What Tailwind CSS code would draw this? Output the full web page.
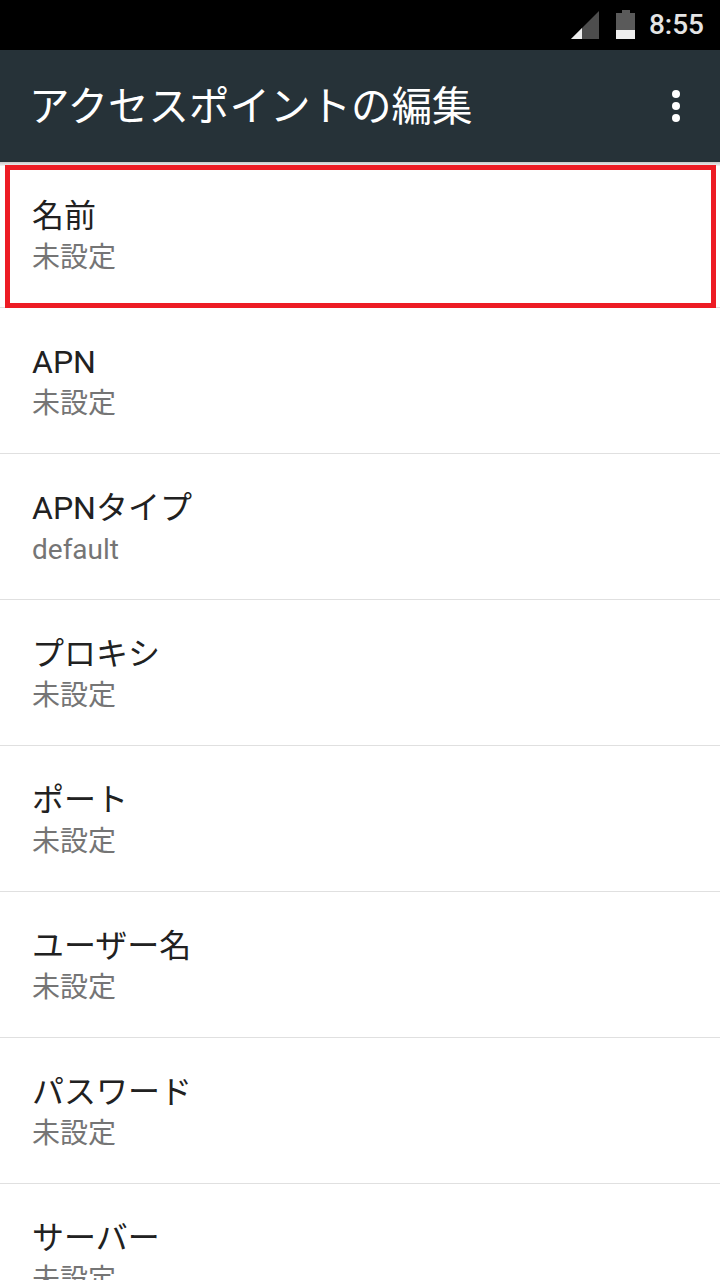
<!DOCTYPE html>
<html lang="ja">
<head>
    <meta charset="UTF-8">
    <title>アクセスポイントの編集</title>
    <script src="https://cdn.jsdelivr.net/npm/@tailwindcss/browser@4"></script>
</head>
<body class="bg-white">
<div class="relative w-[720px] h-[1280px] overflow-hidden bg-white font-['Roboto','Noto_Sans_CJK_JP',sans-serif]">
    <!-- status bar -->
    <div class="h-[50px] bg-black flex items-center justify-end">
        <svg width="30" height="30" viewBox="0 0 30 30" class="mr-[15px]">
            <path d="M1 29 L29 1 V29 Z" fill="#4d4d4d"/>
            <path d="M1 29 L12 18 V29 Z" fill="#eeeeee"/>
        </svg>
        <svg width="20" height="30" viewBox="0 0 20 30" class="mr-[14px]">
            <path d="M1 3 H7 V0 H15 V3 H20 V29 H1 Z" fill="#5a5a5a"/>
            <rect x="1" y="20" width="19" height="9" fill="#eeeeee"/>
        </svg>
        <span class="text-[28px] leading-none font-medium text-[#e4e4e4] mr-[16px]">8:55</span>
    </div>
    <!-- action bar -->
    <div class="h-[112px] bg-[#263238] flex items-center justify-between pl-[29px] pr-[40px]">
        <h1 class="text-[40.5px] leading-none font-normal text-white pt-[3px]">アクセスポイントの編集</h1>
        <div class="flex flex-col gap-[4px]">
            <span class="w-[8px] h-[8px] rounded-full bg-white"></span>
            <span class="w-[8px] h-[8px] rounded-full bg-white"></span>
            <span class="w-[8px] h-[8px] rounded-full bg-white"></span>
        </div>
    </div>
    <!-- list -->
    <div class="flex flex-col">
        <div class="h-[146px] border-b border-[#e0e0e0] pl-[32px] pt-[33px]">
            <p class="text-[32px] leading-[42px] text-[#212121]">名前</p>
            <p class="text-[28px] leading-[42px] text-[#757575]">未設定</p>
        </div>
        <div class="h-[146px] border-b border-[#e0e0e0] pl-[32px] pt-[33px]">
            <p class="text-[32px] leading-[42px] text-[#212121]">APN</p>
            <p class="text-[28px] leading-[42px] text-[#757575]">未設定</p>
        </div>
        <div class="h-[146px] border-b border-[#e0e0e0] pl-[32px] pt-[33px]">
            <p class="text-[32px] leading-[42px] text-[#212121]">APNタイプ</p>
            <p class="text-[28px] leading-[42px] text-[#757575]">default</p>
        </div>
        <div class="h-[146px] border-b border-[#e0e0e0] pl-[32px] pt-[33px]">
            <p class="text-[32px] leading-[42px] text-[#212121]">プロキシ</p>
            <p class="text-[28px] leading-[42px] text-[#757575]">未設定</p>
        </div>
        <div class="h-[146px] border-b border-[#e0e0e0] pl-[32px] pt-[33px]">
            <p class="text-[32px] leading-[42px] text-[#212121]">ポート</p>
            <p class="text-[28px] leading-[42px] text-[#757575]">未設定</p>
        </div>
        <div class="h-[146px] border-b border-[#e0e0e0] pl-[32px] pt-[33px]">
            <p class="text-[32px] leading-[42px] text-[#212121]">ユーザー名</p>
            <p class="text-[28px] leading-[42px] text-[#757575]">未設定</p>
        </div>
        <div class="h-[146px] border-b border-[#e0e0e0] pl-[32px] pt-[33px]">
            <p class="text-[32px] leading-[42px] text-[#212121]">パスワード</p>
            <p class="text-[28px] leading-[42px] text-[#757575]">未設定</p>
        </div>
        <div class="h-[146px] pl-[32px] pt-[33px]">
            <p class="text-[32px] leading-[42px] text-[#212121]">サーバー</p>
            <p class="text-[28px] leading-[42px] text-[#757575]">未設定</p>
        </div>
    </div>
    <!-- shadow under the action bar -->
    <div class="absolute left-0 top-[162px] w-full h-[4px] bg-gradient-to-b from-[#c8c8c8] to-[#f4f4f4]"></div>
    <!-- red highlight -->
    <div class="absolute left-[5px] top-[165px] w-[711px] h-[143px] border-[5px] border-[#ed1c24]"></div>
</div>
</body>
</html>
